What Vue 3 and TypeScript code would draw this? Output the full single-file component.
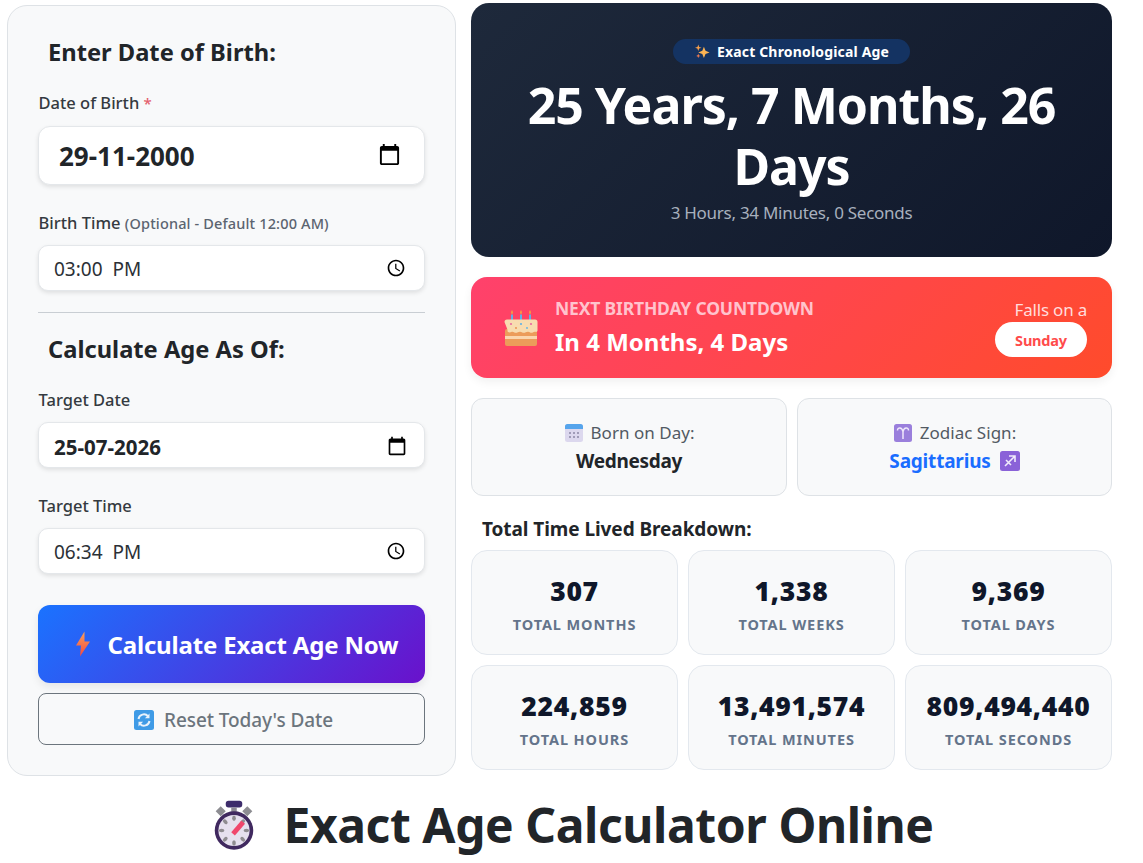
<script setup lang="ts">
const stats: { value: string; label: string }[] = [
  { value: '307', label: 'Total Months' },
  { value: '1,338', label: 'Total Weeks' },
  { value: '9,369', label: 'Total Days' },
  { value: '224,859', label: 'Total Hours' },
  { value: '13,491,574', label: 'Total Minutes' },
  { value: '809,494,440', label: 'Total Seconds' },
]
const calPath = 'M20 3h-1V1h-2v2H7V1H5v2H4c-1.1 0-2 .9-2 2v16c0 1.1.9 2 2 2h16c1.1 0 2-.9 2-2V5c0-1.1-.9-2-2-2zm0 18H4V8h16v13z'
const clockPath = 'M11.99 2C6.47 2 2 6.48 2 12s4.47 10 9.99 10C17.52 22 22 17.52 22 12S17.52 2 11.99 2zM12 20c-4.42 0-8-3.58-8-8s3.58-8 8-8 8 3.58 8 8-3.58 8-8 8zm.5-13H11v6l5.25 3.15.75-1.23-4.5-2.67z'
const dials: [number, number, number][] = [[24, 13.500, 0], [33.500, 17.500, 45], [37.500, 27, 90], [33.500, 36.500, 135], [24, 40.500, 0], [14.500, 36.500, 45], [10.500, 27, 90], [14.500, 17.500, 135]]
</script>

<template>
  <div class="page">
    <div class="columns">
      <section class="panel">
        <h3 class="panel-title">Enter Date of Birth:</h3>
        <label class="field-label first">Date of Birth <span class="req">*</span></label>
        <div class="input input-lg">
          <span>29-11-2000</span>
          <svg class="pick pick-lg" viewBox="0 0 24 24"><path :d="calPath" /></svg>
        </div>
        <label class="field-label next">Birth Time <small>(Optional - Default 12:00 AM)</small></label>
        <div class="input">
          <span class="time">03:00&nbsp; PM</span>
          <svg class="pick" viewBox="0 0 24 24"><path :d="clockPath" /></svg>
        </div>
        <hr class="rule" />
        <h3 class="panel-title">Calculate Age As Of:</h3>
        <label class="field-label">Target Date</label>
        <div class="input input-bold">
          <span>25-07-2026</span>
          <svg class="pick" viewBox="0 0 24 24"><path :d="calPath" /></svg>
        </div>
        <label class="field-label next">Target Time</label>
        <div class="input">
          <span class="time">06:34&nbsp; PM</span>
          <svg class="pick" viewBox="0 0 24 24"><path :d="clockPath" /></svg>
        </div>
        <button class="calc" type="button">
          <svg class="bolt" viewBox="0 0 16 26">
            <defs>
              <linearGradient id="boltG" x1="0" y1="0" x2="0" y2="1">
                <stop offset="0" stop-color="#f9a05a" />
                <stop offset="1" stop-color="#f4483f" />
              </linearGradient>
            </defs>
            <path d="M9.500 0.500 1 14.500h5L5 25.500 15 10.500h-5.500z" fill="url(#boltG)" />
          </svg>
          <span>Calculate Exact Age Now</span>
        </button>
        <button class="reset" type="button">
          <svg class="ico20" viewBox="0 0 20 20">
            <rect width="20" height="20" rx="2.500" fill="#3f9be6" />
            <path d="M4.500 9A5.500 5.500 0 0 1 14 6.200M15.500 11A5.500 5.500 0 0 1 6 13.800" fill="none" stroke="#e8f2fb" stroke-width="2" />
            <path d="M15.500 3.600v4.600h-4.600zM4.500 16.400v-4.600h4.600z" fill="#e8f2fb" />
          </svg>
          <span>Reset Today's Date</span>
        </button>
      </section>

      <div class="results">
        <section class="hero">
          <div class="pill">
            <svg class="ico15" viewBox="0 0 16 16">
              <path d="M9.500 3 11.200 7.300 15.500 9l-4.300 1.700L9.500 15l-1.700-4.300L3.500 9l4.300-1.700z" fill="#fbb454" />
              <path d="M3.500 .5 4.400 3.100 7 4 4.400 4.900 3.500 7.500 2.600 4.900 0 4l2.600-.9z" fill="#f7a04c" />
              <path d="M3.500 10.500 4.200 12l1.500.7-1.500.7-.7 1.600-.7-1.600-1.500-.7 1.500-.7z" fill="#ef7b52" />
            </svg>
            <span>Exact Chronological Age</span>
          </div>
          <h2 class="age">25 Years, 7 Months, 26 Days</h2>
          <p class="age-sub">3 Hours, 34 Minutes, 0 Seconds</p>
        </section>

        <section class="birthday">
          <svg class="cake" viewBox="0 0 36 38">
            <path d="M9 1c1.200 1.700 1.200 3.500 0 4.500-1.200-1-1.200-2.800 0-4.500zM18 1c1.200 1.700 1.200 3.500 0 4.500-1.200-1-1.200-2.800 0-4.500zM27 1c1.200 1.700 1.200 3.500 0 4.500-1.200-1-1.200-2.800 0-4.500z" fill="#f6a23f" />
            <path d="M8 5.500h2V12H8zM17 5.500h2V12h-2zM26 5.500h2V12h-2z" fill="#5fb2e8" />
            <rect x="2" y="20" width="32" height="17" rx="2" fill="#ec9c5a" />
            <rect x="2" y="27" width="32" height="3" fill="#fbd6ae" />
            <path d="M1.500 13a2.500 2.500 0 0 1 2.500-2.500h28a2.500 2.500 0 0 1 2.500 2.500v8.500c0 1-1 1.800-2.200 1.300-1.500-.6-2.300 1-3.800 1s-2.200-1.300-3.800-1-2.300 1-3.900 1-2.500-1.300-4-1.100-2.400 1.100-4 1.100-2.300-1.400-3.900-1-2.300 1-3.700.3c-.7-.2-.7-1.200-.7-2.300z" fill="#f8dcb0" />
            <circle cx="8" cy="15" r="1.100" fill="#e96aa0" /><circle cx="18" cy="15" r="1.100" fill="#5fb2e8" />
            <circle cx="28" cy="15" r="1.100" fill="#e96aa0" /><circle cx="13" cy="19" r=".9" fill="#e88b4c" />
            <circle cx="24" cy="19" r=".9" fill="#5fb2e8" />
          </svg>
          <div class="bd-main">
            <div class="bd-kicker">NEXT BIRTHDAY COUNTDOWN</div>
            <div class="bd-value">In 4 Months, 4 Days</div>
          </div>
          <div class="bd-side">
            <div class="bd-falls">Falls on a</div>
            <div class="bd-day">Sunday</div>
          </div>
        </section>

        <div class="info-row">
          <div class="info">
            <div class="info-label">
              <svg class="ico18" viewBox="0 0 18 18">
                <rect width="18" height="18" rx="2.500" fill="#dcd8ee" />
                <path d="M0 5V2.500A2.500 2.500 0 0 1 2.500 0h13A2.500 2.500 0 0 1 18 2.500V5z" fill="#56a5ec" />
                <g fill="#a09cb8">
                  <rect x="4" y="8" width="2" height="2" /><rect x="8" y="8" width="2" height="2" /><rect x="12" y="8" width="2" height="2" />
                  <rect x="4" y="12" width="2" height="2" /><rect x="8" y="12" width="2" height="2" /><rect x="12" y="12" width="2" height="2" />
                </g>
              </svg>
              <span>Born on Day:</span>
            </div>
            <div class="info-value">Wednesday</div>
          </div>
          <div class="info">
            <div class="info-label">
              <svg class="ico18" viewBox="0 0 18 18">
                <rect width="18" height="18" rx="2.500" fill="#9a7fdc" />
                <path d="M3.500 6.500C3.500 3 8 3 9 7.500V15M14.500 6.500C14.500 3 10 3 9 7.500" fill="none" stroke="#efe9fb" stroke-width="1.500" />
              </svg>
              <span>Zodiac Sign:</span>
            </div>
            <div class="info-value zodiac">
              <span>Sagittarius</span>
              <svg class="ico20" viewBox="0 0 20 20">
                <rect width="20" height="20" rx="2.500" fill="#8a62d8" />
                <path d="M5 15 15 5M9 5h6v6M6 9l5 5" fill="none" stroke="#f1ecfb" stroke-width="1.600" />
              </svg>
            </div>
          </div>
        </div>

        <h4 class="breakdown">Total Time Lived Breakdown:</h4>
        <div class="stats">
          <div v-for="s in stats" :key="s.label" class="stat">
            <div class="stat-value">{{ s.value }}</div>
            <div class="stat-label">{{ s.label }}</div>
          </div>
        </div>
      </div>
    </div>

    <h1 class="title">
      <svg class="watch" viewBox="0 0 48 54">
        <rect x="15" y="0.500" width="18" height="7.500" rx="3" fill="#3d2c6b" />
        <rect x="21" y="8" width="6" height="5" fill="#8d8a94" />
        <path d="M4 12 9.500 6.500l5.500 5.500-5.500 5.500zM44 12l-5.500-5.500L33 12l5.500 5.500z" fill="#8d8d92" />
        <circle cx="24" cy="33" r="21" fill="#40295f" />
        <circle cx="24" cy="33" r="17" fill="#e6e0ee" />
        <g fill="#8f8c90" transform="translate(0 6)">
          <ellipse v-for="(d, i) in dials" :key="i" :cx="d[0]" :cy="d[1]" rx="2" ry="3" :transform="`rotate(${d[2]} ${d[0]} ${d[1]})`" />
        </g>
        <path d="M21 35l11-13 4 3.500-11 13z" fill="#f0466c" />
      </svg>
      <span>Exact Age Calculator Online</span>
    </h1>
  </div>
</template>

<style>
html, body { background: #fff; }
</style>

<style scoped>
.page {
  font-family: "Noto Sans", "Open Sans", sans-serif;
  color: #212529;
  padding: 3px 31px 0 7px;
  box-sizing: border-box;
  width: 1143px;
  height: 863px;
  overflow: hidden;
}
.columns { display: flex; gap: 15px; align-items: flex-start; }
.panel {
  box-sizing: border-box;
  width: 449px;
  margin-top: 2px;
  padding: 30px 30px 30px;
  background: #f8f9fa;
  border: 1px solid #dee2e6;
  border-radius: 20px;
}
.panel-title {
  margin: 0 0 24px;
  padding-left: 10px;
  font-size: 23.700px;
  line-height: 32px;
  font-weight: 700;
}
.field-label {
  display: block;
  font-size: 16.500px;
  line-height: 22px;
  font-weight: 500;
  color: #343a40;
  margin-bottom: 11px;
  padding-left: 0.5px;
}
.field-label.first { margin-bottom: 12px; }
.field-label.next { margin-top: 27px; }
.field-label small { font-size: 14.500px; font-weight: 500; color: #5b6470; letter-spacing: 0.15px; }
.req { color: #e4606d; font-size: 15px; }
.input {
  box-sizing: border-box;
  height: 46px;
  display: flex;
  align-items: center;
  justify-content: space-between;
  padding: 2px 18px 0 15px;
  background: #fff;
  border: 1px solid #e4e7ea;
  border-radius: 10px;
  box-shadow: 0 2px 4px rgba(0, 0, 0, 0.1);
  font-size: 19px;
}
.time { color: #2b3036; }
.input-bold { font-weight: 700; padding-right: 17px; padding-top: 3px; font-size: 20.500px; }
.input-lg {
  height: 59px;
  padding: 1px 23px 0 20px;
  font-size: 26px;
  font-weight: 700;
  border-radius: 12px;
}
.pick { width: 20px; height: 20px; fill: #000; margin-top: -2px; }
.pick-lg { width: 23px; height: 23px; margin-top: -3px; }
.rule { border: 0; border-top: 1px solid #c9ced3; margin: 21px 0 20px; }
.calc {
  margin-top: 31px;
  width: 100%;
  height: 78px;
  display: flex;
  align-items: center;
  justify-content: center;
  gap: 17px;
  padding: 0 0 0 10px;
  border: 0;
  border-radius: 12px;
  background: linear-gradient(135deg, #1a73ff, #6a11cb);
  box-shadow: 0 4px 8px rgba(0, 0, 0, 0.08);
  color: #fff;
  font-family: inherit;
  font-size: 24px;
  font-weight: 700;
  letter-spacing: -0.18px;
}
.bolt { width: 16px; height: 26px; }
.reset {
  margin-top: 10px;
  width: 100%;
  height: 52px;
  display: flex;
  align-items: center;
  justify-content: center;
  gap: 10px;
  padding: 1px 0 0 4px;
  background: transparent;
  border: 1px solid #6c757d;
  border-radius: 8px;
  color: #6c757d;
  font-family: inherit;
  font-size: 19px;
  font-weight: 500;
  letter-spacing: -0.1px;
}
.ico20 { width: 20px; height: 20px; flex: none; }
.ico18 { width: 18px; height: 18px; flex: none; }
.ico15 { width: 15px; height: 15px; flex: none; }
.results { width: 641px; }
.hero {
  box-sizing: border-box;
  height: 254px;
  padding-top: 36px;
  border-radius: 18px;
  background: linear-gradient(135deg, #1e293b, #0f172a);
  color: #fff;
  text-align: center;
}
.pill {
  display: inline-flex;
  align-items: center;
  gap: 7px;
  height: 25px;
  padding: 0 21px 0 22px;
  border-radius: 13px;
  background: #143362;
  font-size: 14px;
  font-weight: 700;
  letter-spacing: 0.17px;
}
.age {
  margin: 11px 0 0;
  font-size: 50px;
  line-height: 61px;
  font-weight: 700;
  padding: 0 30px;
  letter-spacing: -1px;
}
.age-sub {
  margin: 4px 0 0;
  font-size: 17px;
  line-height: 24px;
  color: #a7b0bd;
  letter-spacing: -0.27px;
}
.birthday {
  box-sizing: border-box;
  margin-top: 20px;
  height: 101px;
  display: flex;
  align-items: center;
  padding: 0 25px 0 32px;
  border-radius: 16px;
  background: linear-gradient(135deg, #ff416c, #ff4b2b);
  box-shadow: 0 4px 10px rgba(0, 0, 0, 0.06);
  color: #fff;
}
.cake { width: 36px; height: 38px; flex: none; margin-right: 16px; }
.bd-main { flex: 1; padding-bottom: 2px; }
.bd-kicker { font-size: 17.500px; line-height: 24px; font-weight: 700; color: #ffc3cd; letter-spacing: -0.17px; }
.bd-value { margin-top: 6px; font-size: 24px; line-height: 32px; font-weight: 700; }
.bd-side { display: flex; flex-direction: column; align-items: flex-end; }
.bd-falls { font-size: 17px; line-height: 24px; color: #ffdcdc; letter-spacing: -0.2px; }
.bd-day {
  margin-top: 0;
  width: 92px;
  height: 35px;
  display: flex;
  align-items: center;
  justify-content: center;
  border-radius: 18px;
  background: #fff;
  color: #ff4b4b;
  font-size: 14.500px;
  font-weight: 700;
  letter-spacing: -0.2px;
}
.info-row { margin-top: 20px; display: grid; grid-template-columns: 316px 315px; gap: 10px; }
.info {
  box-sizing: border-box;
  height: 98px;
  display: flex;
  flex-direction: column;
  align-items: center;
  justify-content: center;
  background: #f8f9fa;
  border: 1px solid #dee2e6;
  border-radius: 12px;
}
.info-label { display: flex; align-items: center; gap: 8px; font-size: 17px; line-height: 24px; color: #525a63; letter-spacing: 0.02px; margin-top: 1px; padding-left: 1px; }
.info-value { margin-top: 3px; font-size: 19px; line-height: 26px; font-weight: 700; letter-spacing: -0.3px; }
.zodiac { display: flex; align-items: center; gap: 9px; color: #1a6dff; letter-spacing: -0.2px; }
.breakdown { margin: 20px 0 8px 11px; font-size: 19px; line-height: 26px; font-weight: 700; letter-spacing: -0.07px; }
.stats { display: grid; grid-template-columns: repeat(3, 207px); gap: 10px; }
.stat {
  box-sizing: border-box;
  height: 105px;
  padding-top: 2px;
  display: flex;
  flex-direction: column;
  align-items: center;
  justify-content: center;
  background: #f8f9fa;
  border: 1px solid #e3e8ee;
  border-radius: 16px;
}
.stat-value { font-size: 26.500px; line-height: 36px; font-weight: 900; color: #0f172a; letter-spacing: 0.7px; }
.stat-label {
  margin-top: 5px;
  font-size: 14.500px;
  line-height: 20px;
  font-weight: 700;
  color: #64748b;
  text-transform: uppercase;
  letter-spacing: 0.9px;
}
.title {
  margin: 20px 0 0;
  width: 1132px;
  display: flex;
  align-items: center;
  justify-content: center;
  gap: 27px;
  font-size: 48px;
  line-height: 58px;
  font-weight: 700;
  letter-spacing: -0.42px;
}
.watch { width: 44px; height: 50px; flex: none; }
</style>
